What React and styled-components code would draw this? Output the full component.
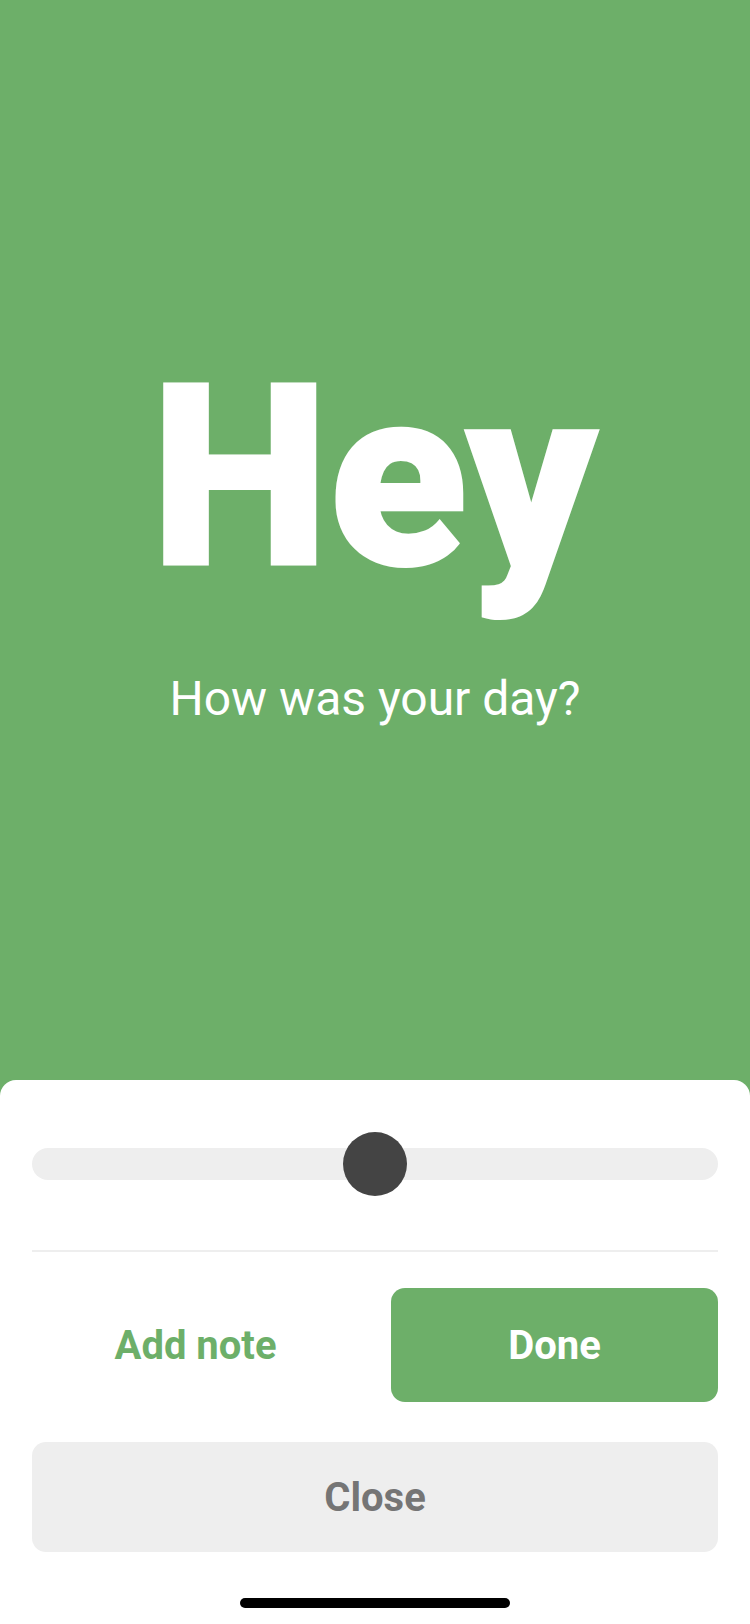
import React from "react";
import styled, { createGlobalStyle } from "styled-components";

const GREEN = "#6daf69";

const GlobalStyle = createGlobalStyle`
  html, body {
    margin: 0;
    padding: 0;
    background: ${GREEN};
    font-family: Roboto, "Liberation Sans", sans-serif;
  }
  * { box-sizing: border-box; }
`;

export default function App() {
  return (
    <Screen>
      <GlobalStyle />
      <Hero>
        <Title>Hey</Title>
        <Subtitle>How was your day?</Subtitle>
      </Hero>
      <Sheet>
        <SliderRow>
          <Track />
          <Thumb style={{ left: "50%" }} />
        </SliderRow>
        <Divider />
        <ButtonRow>
          <TextButton>Add note</TextButton>
          <PrimaryButton>Done</PrimaryButton>
        </ButtonRow>
        <CloseButton>Close</CloseButton>
        <HomeIndicator />
      </Sheet>
    </Screen>
  );
}

const Screen = styled.div`
  width: 750px;
  height: 1624px;
  background: ${GREEN};
  display: flex;
  flex-direction: column;
  overflow: hidden;
`;

const Hero = styled.div`
  height: 1080px;
  padding-top: 351px;
  display: flex;
  flex-direction: column;
  align-items: center;
  color: #fff;
`;

const Title = styled.h1`
  margin: 0 0 0 -2px;
  font-size: 254px;
  line-height: 1;
  font-weight: 900;
  -webkit-text-stroke: 2px #fff;
`;

const Subtitle = styled.p`
  margin: 70px 0 0;
  font-size: 48px;
  line-height: 1;
  font-weight: 400;
`;

const Sheet = styled.div`
  flex: 1;
  background: #fff;
  border-radius: 16px 16px 0 0;
  padding: 52px 32px 16px;
  display: flex;
  flex-direction: column;
`;

const SliderRow = styled.div`
  position: relative;
  height: 64px;
  display: flex;
  align-items: center;
`;

const Track = styled.div`
  width: 100%;
  height: 32px;
  border-radius: 16px;
  background: #eeeeee;
`;

const Thumb = styled.div`
  position: absolute;
  top: 0;
  width: 64px;
  height: 64px;
  margin-left: -32px;
  border-radius: 50%;
  background: #444444;
`;

const Divider = styled.div`
  height: 2px;
  background: #eeeeee;
  margin-top: 54px;
`;

const ButtonRow = styled.div`
  margin-top: 36px;
  display: grid;
  grid-template-columns: 1fr 1fr;
  gap: 32px;
`;

const BaseButton = styled.button`
  border: none;
  font-family: Roboto, "Liberation Sans", sans-serif;
  font-size: 40px;
  font-weight: 700;
  border-radius: 14px;
  display: flex;
  align-items: center;
  justify-content: center;
  padding: 0;
`;

const TextButton = styled(BaseButton)`
  height: 114px;
  background: transparent;
  color: ${GREEN};
`;

const PrimaryButton = styled(BaseButton)`
  height: 114px;
  background: ${GREEN};
  color: #fff;
`;

const CloseButton = styled(BaseButton)`
  margin-top: 40px;
  height: 110px;
  background: #eeeeee;
  color: #757575;
`;

const HomeIndicator = styled.div`
  margin: 46px auto 0;
  width: 270px;
  height: 10px;
  border-radius: 5px;
  background: #000;
`;
